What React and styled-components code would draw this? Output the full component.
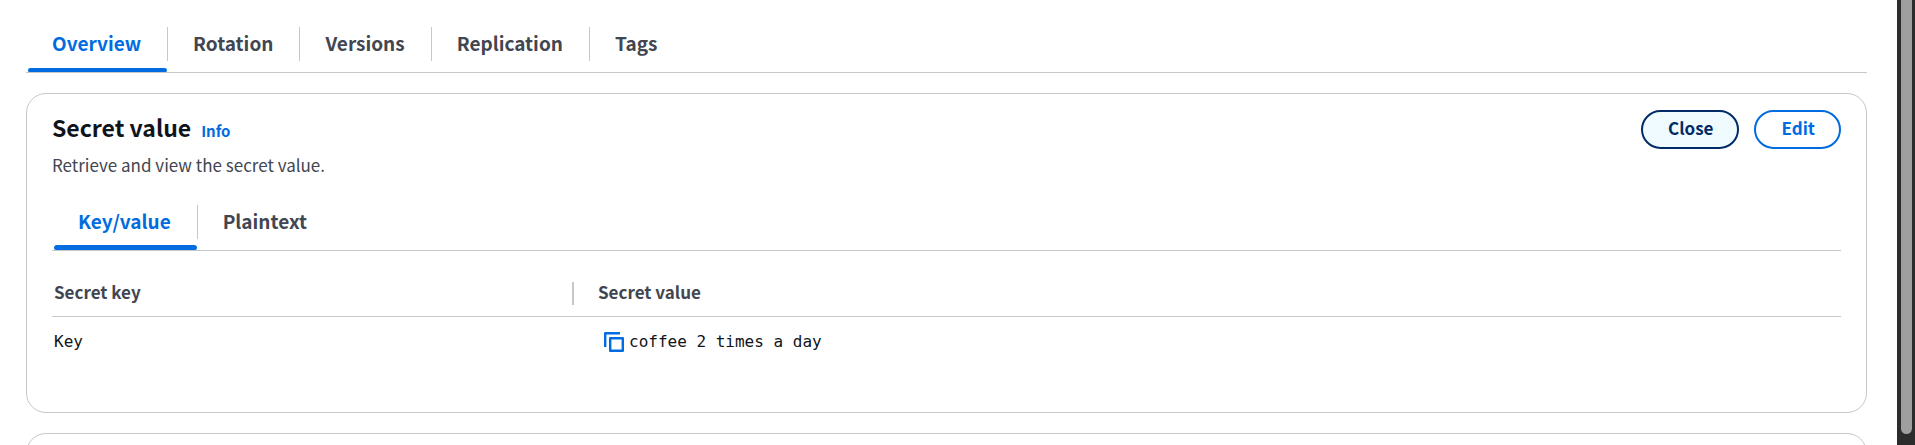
import React, { useState } from "react";
import styled, { createGlobalStyle } from "styled-components";

const blue = "#006ce0";
const navy = "#002b66";
const line = "#c6c6cd";
const ink = "#0f141a";
const muted = "#424650";

const Global = createGlobalStyle`
  *, *::before, *::after { box-sizing: border-box; }
  body {
    margin: 0;
    background: #fff;
    color: ${ink};
    font-family: "Noto Sans CJK SC", "Noto Sans", sans-serif;
    font-size: 17px;
    line-height: 24px;
  }
`;

const Page = styled.div`
  display: flex;
  height: 100vh;
  overflow: hidden;
`;

const Main = styled.main`
  flex: 1;
  min-width: 0;
  padding: 27px 30px 0 26px;
`;

const ScrollTrack = styled.div`
  flex: none;
  width: 18px;
  padding: 0 3px 11px 4px;
  background: #2c2c2c;
`;

const ScrollThumb = styled.div`
  height: 100%;
  border-radius: 0 0 6px 6px;
  background: #9f9f9f;
`;

const TabList = styled.div`
  display: flex;
  padding-left: 1px;
  border-bottom: 1px solid ${line};
`;

const TabItem = styled.div`
  display: flex;
  align-items: flex-start;

  &:not(:last-child)::after {
    content: "";
    width: 1px;
    height: 34px;
    background: ${line};
  }
`;

const TabButton = styled.button`
  display: flex;
  flex-direction: column;
  height: 45px;
  padding: 4px 0 0;
  border: 0;
  background: none;
  color: ${(p) => (p.$active ? blue : muted)};
  font: inherit;
  font-size: 19px;
  font-weight: 700;
  cursor: pointer;

  &::after {
    content: "";
    align-self: stretch;
    height: ${(p) => (p.$nested ? 5 : 4)}px;
    margin: auto 0 0 1px;
    border-radius: 3px 3px 2px 2px;
    background: ${(p) => (p.$active ? blue : "transparent")};
  }
`;

const TabLabel = styled.span`
  padding: 0 26px 0 25px;
`;

const Card = styled.section`
  margin-top: 20px;
  padding: 16px 25px 58px;
  border: 1px solid ${line};
  border-radius: 20px;
`;

const CardHeader = styled.header`
  display: flex;
  justify-content: space-between;
  align-items: flex-start;
  margin-bottom: 28px;
`;

const TitleRow = styled.div`
  display: flex;
  align-items: baseline;
  gap: 10px;
  padding-top: 2px;
`;

const Title = styled.h2`
  margin: 0;
  font-size: 23px;
  font-weight: 700;
  line-height: 30px;
`;

const InfoLink = styled.a`
  color: ${blue};
  font-size: 15px;
  font-weight: 700;
  text-decoration: none;
`;

const Description = styled.p`
  margin: 10px 0 0;
  color: ${muted};
`;

const Actions = styled.div`
  display: flex;
  gap: 15px;
`;

const PillButton = styled.button`
  height: 39px;
  padding: 0 24px 3px 25px;
  border: 2px solid ${(p) => (p.$pressed ? navy : blue)};
  border-radius: 20px;
  background: ${(p) => (p.$pressed ? "#f0fbff" : "#fff")};
  color: ${(p) => (p.$pressed ? navy : blue)};
  font: inherit;
  font-weight: 700;
  cursor: pointer;
`;

const Table = styled.table`
  width: 100%;
  margin-top: 21px;
  border-collapse: collapse;
  table-layout: fixed;
  text-align: left;
`;

const KeyColumn = styled.col`
  width: 522px;
`;

const HeadCell = styled.th`
  padding: 8px 0 12px ${(p) => (p.$value ? 24 : 2)}px;
  border-bottom: 1px solid ${line};
  color: ${muted};
  font-weight: 700;
`;

const HeadContent = styled.div`
  display: flex;
  justify-content: space-between;
  align-items: flex-end;
`;

const Divider = styled.span`
  width: 2px;
  height: 23px;
  margin-bottom: -1px;
  background: ${line};
`;

const Cell = styled.td`
  padding: 13px 0 0 ${(p) => (p.$value ? 30 : 2)}px;
  font-family: "DejaVu Sans Mono", monospace;
  font-size: 16px;
`;

const ValueContent = styled.div`
  display: flex;
  align-items: center;
  gap: 5px;
`;

const CopyButton = styled.button`
  display: flex;
  padding: 0;
  border: 0;
  background: none;
  color: ${blue};
  cursor: pointer;
`;

function CopyIcon() {
  return (
    <svg width="20" height="20" viewBox="0 0 20 20" fill="none" stroke="currentColor" strokeWidth="2.4" strokeLinejoin="round" aria-hidden="true">
      <path d="M1.2 15V1.2H16" />
      <rect x="6.2" y="6.2" width="12.6" height="12.6" />
    </svg>
  );
}

function Tabs({ items, label, nested }) {
  const [active, setActive] = useState(items[0]);
  return (
    <TabList role="tablist" aria-label={label}>
      {items.map((item) => (
        <TabItem key={item} role="presentation">
          <TabButton
            type="button"
            role="tab"
            aria-selected={item === active}
            $active={item === active}
            $nested={nested}
            onClick={() => setActive(item)}
          >
            <TabLabel>{item}</TabLabel>
          </TabButton>
        </TabItem>
      ))}
    </TabList>
  );
}

export default function App() {
  return (
    <Page>
      <Global />
      <Main>
        <Tabs label="Secret details" items={["Overview", "Rotation", "Versions", "Replication", "Tags"]} />
        <Card>
          <CardHeader>
            <div>
              <TitleRow>
                <Title>Secret value</Title>
                <InfoLink href="#info">Info</InfoLink>
              </TitleRow>
              <Description>Retrieve and view the secret value.</Description>
            </div>
            <Actions>
              <PillButton type="button" $pressed>Close</PillButton>
              <PillButton type="button">Edit</PillButton>
            </Actions>
          </CardHeader>
          <Tabs nested label="Secret format" items={["Key/value", "Plaintext"]} />
          <Table>
            <colgroup>
              <KeyColumn />
              <col />
            </colgroup>
            <thead>
              <tr>
                <HeadCell scope="col">
                  <HeadContent>
                    Secret key
                    <Divider />
                  </HeadContent>
                </HeadCell>
                <HeadCell scope="col" $value>Secret value</HeadCell>
              </tr>
            </thead>
            <tbody>
              <tr>
                <Cell>Key</Cell>
                <Cell $value>
                  <ValueContent>
                    <CopyButton type="button" aria-label="Copy secret value">
                      <CopyIcon />
                    </CopyButton>
                    coffee 2 times a day
                  </ValueContent>
                </Cell>
              </tr>
            </tbody>
          </Table>
        </Card>
        <Card />
      </Main>
      <ScrollTrack>
        <ScrollThumb />
      </ScrollTrack>
    </Page>
  );
}
